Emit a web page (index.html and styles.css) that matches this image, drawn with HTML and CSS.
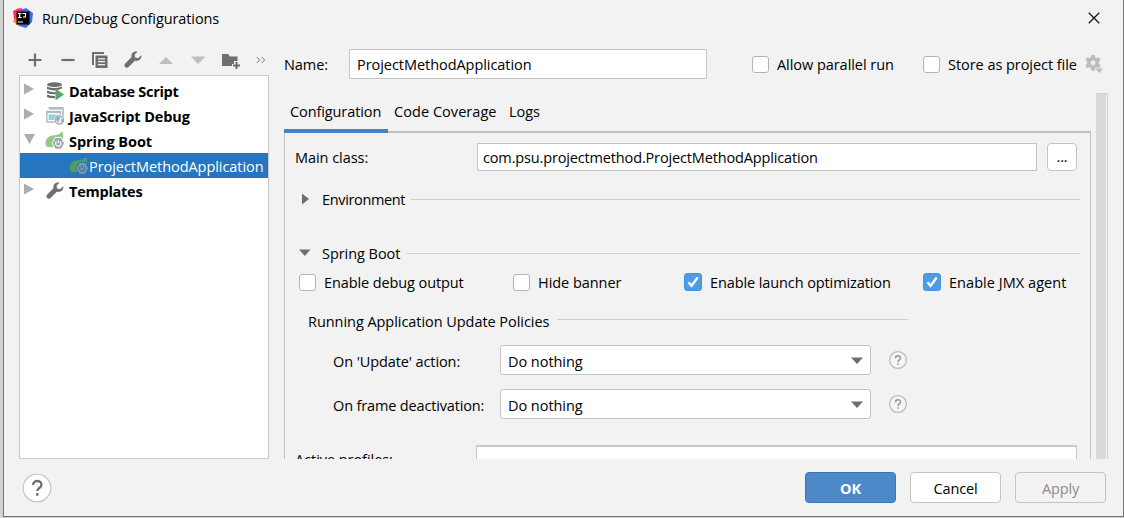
FILE: index.html
```html
<!DOCTYPE html>
<html lang="en">
<head>
<meta charset="utf-8">
<title>Run/Debug Configurations</title>
<link rel="stylesheet" href="styles.css">
</head>
<body>
<svg class="defs" width="0" height="0">
  <defs>
    <symbol id="arrow-right" viewBox="0 0 11 12"><path d="M0 0.500L10 6 0 11.500z" fill="#adadad"/></symbol>
    <symbol id="arrow-down" viewBox="0 0 11 12"><path d="M0 1h11L5.500 11z" fill="#adadad"/></symbol>
    <symbol id="wrench" viewBox="0 0 18 18"><path d="M17.300 4.200l-3.300 3-2.900-.7-.6-2.800L13.500.8C10.500-.2 7 1.800 7.400 6.200L1 12.800c-1.300 1.500 0 3.900 1.900 3.900.7 0 1.200-.3 1.600-.7L10.900 9.800c4.500.7 6.900-2.200 6.400-5.600z" fill="#6e6e6e"/></symbol>
    <symbol id="boot" viewBox="0 0 20 19">
      <path class="leaf" d="M1.500 15.500C-1.500 9 3 4.800 9 4.300c3.500-.3 6.500-1.200 8.200-4C18.800 5 18.800 9 15 12 11 15.500 6 17.500 1.500 15.500z"/>
      <path class="halo" d="M10 6h6.500L20 12.300l-3.400 6.200H10L6.700 12.300z"/>
      <path class="nut" d="M10.600 7h5.400L19 12.300l-3 5.400h-5.400l-3-5.400z"/>
      <path class="power" d="M11.400 10.500a2.700 2.700 0 1 0 3.800 0M13.300 9.200v3" fill="none" stroke-width="1.200"/>
    </symbol>
    <symbol id="question" viewBox="0 0 20 20"><circle cx="10" cy="10" r="8.400" fill="#f5f5f5" stroke="#b3bcc3" stroke-width="1.300"/><path d="M7.500 8.200c0-3.300 5-3.300 5-.2 0 2-2.500 1.900-2.500 4M10 13.200v1.600" fill="none" stroke="#8a969e" stroke-width="1.500"/></symbol>
  </defs>
</svg>
<div class="window">
  <header class="titlebar">
    <svg class="logo" viewBox="0 0 20 20">
      <path d="M0 3L6 0l3 3v14l-5-1-3-5z" fill="#fc3161"/><path d="M0 13l4-4 3 7-2 2z" fill="#f88a27"/>
      <path d="M8 2l5-2 7 5-1 9-6 6-7-2z" fill="#3b6bf0"/><path d="M4 2l4-2 5 3z" fill="#c93ab4"/>
      <path d="M3.500 3.500h13v13h-13z"/><path d="M5 5.500h3.500M6.700 5.500v4M5 9.500h3.500M9.500 5.500h3v2.700q0 1.300-2.500.8M5 14h5" stroke="#fff" fill="none" stroke-width="1.200"/>
    </svg>
    <span class="title">Run/Debug Configurations</span>
    <svg class="close" viewBox="0 0 13 13"><path d="M.8.800l11.400 11.400M12.200.8L.8 12.200" stroke="#111" stroke-width="1.300"/></svg>
  </header>
  <main class="body">
    <section class="sidebar">
      <div class="toolbar">
        <svg viewBox="0 0 18 18"><path d="M9 2.500v13M2.500 9h13" stroke="#6e6e6e" stroke-width="2.200"/></svg>
        <svg viewBox="0 0 18 18"><path d="M2.500 9h13" stroke="#6e6e6e" stroke-width="2.200"/></svg>
        <svg viewBox="0 0 18 18"><path d="M1 14V1h12v2H3v11z" fill="#6e6e6e"/><path d="M4.500 4.500h12V17h-12z" fill="#6e6e6e"/><path d="M7 7.800h7M7 10.700h7M7 13.600h7" stroke="#f2f2f2" stroke-width="1.200"/></svg>
        <svg viewBox="0 0 18 18"><use href="#wrench"/></svg>
        <svg viewBox="0 0 18 18"><path d="M2 13l7-7 7 7z" fill="#bdbdbd"/></svg>
        <svg viewBox="0 0 18 18"><path d="M2 5.500h14.500L9 13z" fill="#bdbdbd"/></svg>
        <svg viewBox="0 0 18 18"><path d="M0 3h6l2 2.500h7.500V10H12v3h-2v2H0z" fill="#6e6e6e"/><path d="M14.500 11v7M11 14.500h7" stroke="#6e6e6e" stroke-width="2"/></svg>
        <svg class="more" viewBox="0 0 10 8"><path d="M.7 1l3 3-3 3M5.700 1l3 3-3 3" fill="none" stroke="#777"/></svg>
      </div>
      <div class="tree">
        <div class="node"><svg class="twist"><use href="#arrow-right"/></svg>
          <svg class="kind" viewBox="0 0 18 18"><g fill="#6e6e6e"><ellipse cx="8.500" cy="2.600" rx="7.500" ry="2.300"/><path d="M1 4.500q7 3 15 0v2q-7 3.500-15 .5zM1 8.500q5 2.300 9 1.500v2q-5 .8-9-1zM1 12.500q5 2 8 1.500v2.200q-5 .5-8-1.200z"/></g><path d="M9.500 6.500l8.500 6-8.500 6z" fill="#59a869"/></svg>
          <b class="t-db">Database Script</b></div>
        <div class="node"><svg class="twist"><use href="#arrow-right"/></svg>
          <svg class="kind" viewBox="0 0 18 18"><path d="M2.500.8H17v9M17 1.800H3" fill="none" stroke="#b0bac2" stroke-width="1.600"/><path d="M.8 4.500h13.500V15H.8z" fill="#fff" stroke="#b0bac2" stroke-width="1.400"/><path d="M.8 5h13.500" stroke="#b0bac2" stroke-width="2"/><path d="M2.600 7.400h10V13h-10z" fill="#8fd0ea"/><circle cx="13.300" cy="13" r="5.400" fill="#fff"/><circle cx="13.300" cy="13" r="4.200" fill="#e9edf0" stroke="#9aa7b0" stroke-width="1.200"/><path d="M10 11l3-1.500 1.500 1.500-2 2.500.3 2.200-2.500-2.200zM15.500 12l2 .5-1 3-1.500-1z" fill="#9aa7b0"/></svg>
          <b class="t-js">JavaScript Debug</b></div>
        <div class="node open"><svg class="twist"><use href="#arrow-down"/></svg>
          <svg class="kind boot"><use href="#boot"/></svg>
          <b class="t-sb">Spring Boot</b></div>
        <div class="node child selected"><svg class="kind boot"><use href="#boot"/></svg>
          <span class="t-app">ProjectMethodApplication</span></div>
        <div class="node"><svg class="twist"><use href="#arrow-right"/></svg>
          <svg class="kind"><use href="#wrench"/></svg>
          <b class="t-tpl">Templates</b></div>
      </div>
    </section>
    <section class="editor">
      <div class="namerow">
        <span class="namelabel">Name:</span>
        <div class="field name"><span class="t-app">ProjectMethodApplication</span></div>
        <i class="check"></i><span class="allow">Allow parallel run</span>
        <i class="check"></i><span class="store">Store as project file</span>
        <svg class="gear" viewBox="0 0 18 18"><path d="M6.500 0h3l.5 2.400 1.600.9 2.300-.8 1.500 2.700-1.800 1.600v1.900l1.800 1.500-1.500 2.700-2.300-.8-1.600.9-.5 2.500h-3L6 13l-1.600-.9-2.300.8L.6 10.200l1.800-1.500V6.800L.6 5.200l1.500-2.700 2.300.8L6 2.400zM8 5.200a2.600 2.600 0 1 0 0 5.200 2.600 2.600 0 0 0 0-5.200z" fill="#bcbcbc" fill-rule="evenodd" stroke="#bcbcbc" stroke-width=".5"/><path d="M10.500 13.500h7.500L14.200 18z" fill="#bcbcbc"/></svg>
      </div>
      <div class="scroller">
        <div class="pane">
          <nav class="tabs"><span class="tab active t-conf">Configuration</span><span class="tab t-cov">Code Coverage</span><span class="tab">Logs</span></nav>
          <div class="panel">
            <div class="mainclass"><span class="label">Main class:</span><div class="field"><span class="t-class">com.psu.projectmethod.ProjectMethodApplication</span></div><button class="browse">...</button></div>
            <div class="section env"><svg viewBox="0 0 12 12"><path d="M3 .5l7 5.500-7 5.500z" fill="#6e6e6e"/></svg><span>Environment</span><hr></div>
            <div class="section spring"><svg viewBox="0 0 12 12"><path d="M0 2.500h11.500L5.800 9z" fill="#6e6e6e"/></svg><span>Spring Boot</span><hr></div>
            <div class="options">
              <label><i class="check"></i><span class="t-debug">Enable debug output</span></label>
              <label><i class="check"></i><span class="t-hide">Hide banner</span></label>
              <label><i class="check on"><svg viewBox="0 0 18 18"><path d="M4.500 9.300l3 3.500L13.700 4.500" fill="none" stroke="#fff" stroke-width="2.300"/></svg></i><span class="t-launch">Enable launch optimization</span></label>
              <label><i class="check on"><svg viewBox="0 0 18 18"><path d="M4.500 9.300l3 3.500L13.700 4.500" fill="none" stroke="#fff" stroke-width="2.300"/></svg></i><span class="t-jmx">Enable JMX agent</span></label>
            </div>
            <div class="policies"><span class="t-run">Running Application Update Policies</span><hr></div>
            <div class="policy"><span class="label t-upd">On 'Update' action:</span><div class="combo"><span>Do nothing</span><svg viewBox="0 0 12 7"><path d="M0 .5h12L6 7z" fill="#6e6e6e"/></svg></div><svg class="hint"><use href="#question"/></svg></div>
            <div class="policy"><span class="label t-frame">On frame deactivation:</span><div class="combo"><span>Do nothing</span><svg viewBox="0 0 12 7"><path d="M0 .5h12L6 7z" fill="#6e6e6e"/></svg></div><svg class="hint"><use href="#question"/></svg></div>
            <div class="profiles"><span class="label">Active profiles:</span><div class="field"></div></div>
          </div>
        </div>
        <div class="scrollbar"></div>
      </div>
    </section>
  </main>
  <footer class="footer">
    <svg class="help" viewBox="0 0 30 30"><circle cx="15" cy="15" r="13.800" fill="#fff" stroke="#c4c4c4" stroke-width="1.100"/><path d="M11 12c0-5.300 8.500-5.300 8.500-.3 0 3.300-4.200 3.200-4.200 6.300M15.300 20v2.700" fill="none" stroke="#6e6e6e" stroke-width="2.300"/></svg>
    <button class="btn primary">OK</button><button class="btn">Cancel</button><button class="btn disabled">Apply</button>
  </footer>
</div>
</body>
</html>
```
FILE: styles.css
```css
* { box-sizing: border-box; }
body { margin: 0; width: 1124px; height: 518px; overflow: hidden; background: #d2d2d2; font: 14.5px/20px "Open Sans", "Noto Sans", sans-serif; letter-spacing: -0.05px; color: #000; }
.defs { display: block; height: 0; }
span, b { white-space: nowrap; }
svg { display: block; flex: none; }
button { font: inherit; letter-spacing: -0.15px; padding: 0; color: inherit; }
hr { flex: 1; margin: 0; border: 0; height: 1px; background: #cfcfcf; }

.t-class, .t-frame { letter-spacing: -0.15px; }
.t-conf, .t-debug, .t-launch, .t-upd, .title { letter-spacing: -0.1px; }
.t-cov, .t-jmx { letter-spacing: 0.05px; }
.t-db { letter-spacing: -0.3px; }
.t-js { letter-spacing: -0.1px; }
.t-tpl { letter-spacing: -0.25px; }

.window { margin-left: 3px; width: 1121px; height: 517px; background: #f2f2f2; border: solid #747474; border-width: 0 1px 1px; }
.titlebar { height: 49px; padding: 8px 23px 0 9px; display: flex; }
.logo { width: 20px; height: 20px; }
.title { margin-left: 9px; padding-top: 1px; flex: 1; }
.close { width: 12px; height: 12px; margin-top: 4px; }

.body { display: flex; height: 411px; padding-left: 15px; }
.sidebar { width: 250px; }
.toolbar { height: 26px; padding: 2px 0 0 7px; display: flex; gap: 14.700px; }
.toolbar svg { width: 18px; height: 18px; }
.toolbar .more { width: 10px; height: 8px; margin: 5px 0 0 1px; }
.tree { height: 384px; border: 1px solid #c9c9c9; background: #fff; padding-top: 2px; }
.node { display: flex; align-items: center; height: 25px; padding-left: 4px; }
.node b, .node span { padding-top: 2px; }
.twist { width: 11px; height: 12px; margin: -4px 11px 0 0; }
.kind { width: 18px; height: 18px; margin-right: 5px; }
.kind.boot { width: 20px; height: 19px; margin: 0 4px 0 -1px; }
.boot { --leaf: #93c983; --nut: #9aa7b0; --bg: #fff; }
.selected .boot { --leaf: #4b9f62; --nut: #8298ac; --bg: #2675bf; }
.leaf { fill: var(--leaf); }
.halo { fill: var(--bg); }
.nut { fill: var(--nut); }
.power { stroke: var(--bg); }
.node.child { padding-left: 50px; }
.node.child .boot { margin-right: 0; }
.selected { background: #2675bf; color: #fff; }

.editor { width: 824px; margin-left: 15px; }
.namerow { display: flex; align-items: center; height: 30px; }
.namerow span { padding-top: 2px; }
.namelabel { width: 65px; }
.field { background: #fff; border: 1px solid #c4c4c4; display: flex; align-items: center; }
.field.name { width: 358px; height: 30px; padding-left: 7px; margin-right: 45px; }
.check { width: 17px; height: 17px; background: #fff; border: 1px solid #b4b4b4; border-radius: 3px; flex: none; }
.check.on { width: 18px; height: 18px; border-color: #4a92d8; background: #4d9de5; }
.check.on svg { width: 18px; height: 18px; margin: -1px; }
.allow { width: 146px; margin-left: 8px; }
.store { width: 128px; margin-left: 8px; }
.gear { width: 18px; height: 18px; margin-left: 9px; }

.scroller { display: flex; height: 366px; margin-top: 14px; }
.pane { width: 807px; display: flex; flex-direction: column; }
.scrollbar { width: 13px; margin-left: 5px; background: #d9d9d9; border: solid #d0d0d0; border-width: 1px 1px 0 0; box-shadow: inset -1px 0 #f2f2f2; }
.tabs { display: flex; height: 40px; flex: none; border-bottom: 2px solid #bfbfbf; }
.tab { height: 40px; padding: 8px 6.500px 0 6px; line-height: 21px; }
.active { width: 104px; border-bottom: 4px solid #4083c9; }
.panel { border: solid #bfbfbf; border-width: 0 1px; height: 326px; overflow: hidden; padding: 10px 10px 0 10px; }
.mainclass { display: flex; height: 28px; align-items: center; }
.mainclass .label, .profiles .label { width: 182px; }
.mainclass span { padding-top: 2px; }
.mainclass .field { width: 560px; height: 28px; padding-left: 5px; }
.browse { width: 30px; height: 28px; margin-left: 10px; background: #fff; border: 1px solid #c4c4c4; border-radius: 4px; }
.section { display: flex; align-items: center; height: 20px; padding-left: 4px; }
.section svg { width: 12px; height: 12px; margin-right: 11px; }
.section hr { margin-left: 6px; }
.section span { line-height: 18px; padding-top: 2px; }
.env { margin-top: 18px; }
.env span { letter-spacing: -0.35px; }
.spring { margin-top: 34px; }
.options { display: grid; grid-template-columns: 214px 171px 239px 160px; height: 20px; margin: 8px 0 0 4px; }
.options label { display: flex; align-items: center; gap: 8px; }
.options span { padding-top: 2px; }
.policies { display: flex; align-items: center; width: 600px; margin: 18px 0 0 13px; height: 22px; }
.policies span { padding-top: 3px; }
.policies hr { margin-left: 8px; margin-top: -1px; }
.policy { display: flex; align-items: center; height: 30px; margin: 14px 0 0 38px; }
.policy .label { width: 167px; padding-top: 3px; }
.combo { width: 371px; height: 30px; border: 1px solid #c4c4c4; border-radius: 3px; background: #fff; display: flex; align-items: center; justify-content: space-between; padding: 3px 7px 0 7px; }
.combo svg { width: 12px; height: 7px; margin-top: -2px; }
.hint { width: 20px; height: 20px; margin-left: 17px; }
.profiles { display: flex; margin-top: 26px; }
.profiles .label { padding-top: 5px; width: 181px; }
.profiles .field { width: 601px; height: 30px; border-color: #c9c9c9; border-width: 2px 1px; flex: none; box-shadow: 0 -3px #f2f2f2, 0 -4px #fafafa; }

.footer { display: flex; height: 56px; padding: 12px 0 0 18px; }
.help { width: 30px; height: 30px; margin: 1px 753px 0 0; }
.btn { width: 91px; height: 31px; margin-right: 14px; border: 1px solid #c4c4c4; border-radius: 4px; background: #fff; padding-top: 2px; }
.btn.primary { background: #4d89c9; border-color: #3b75b5; color: #fff; font-weight: 700; }
.btn.disabled { background: #f2f2f2; color: #8c8c8c; }
```
